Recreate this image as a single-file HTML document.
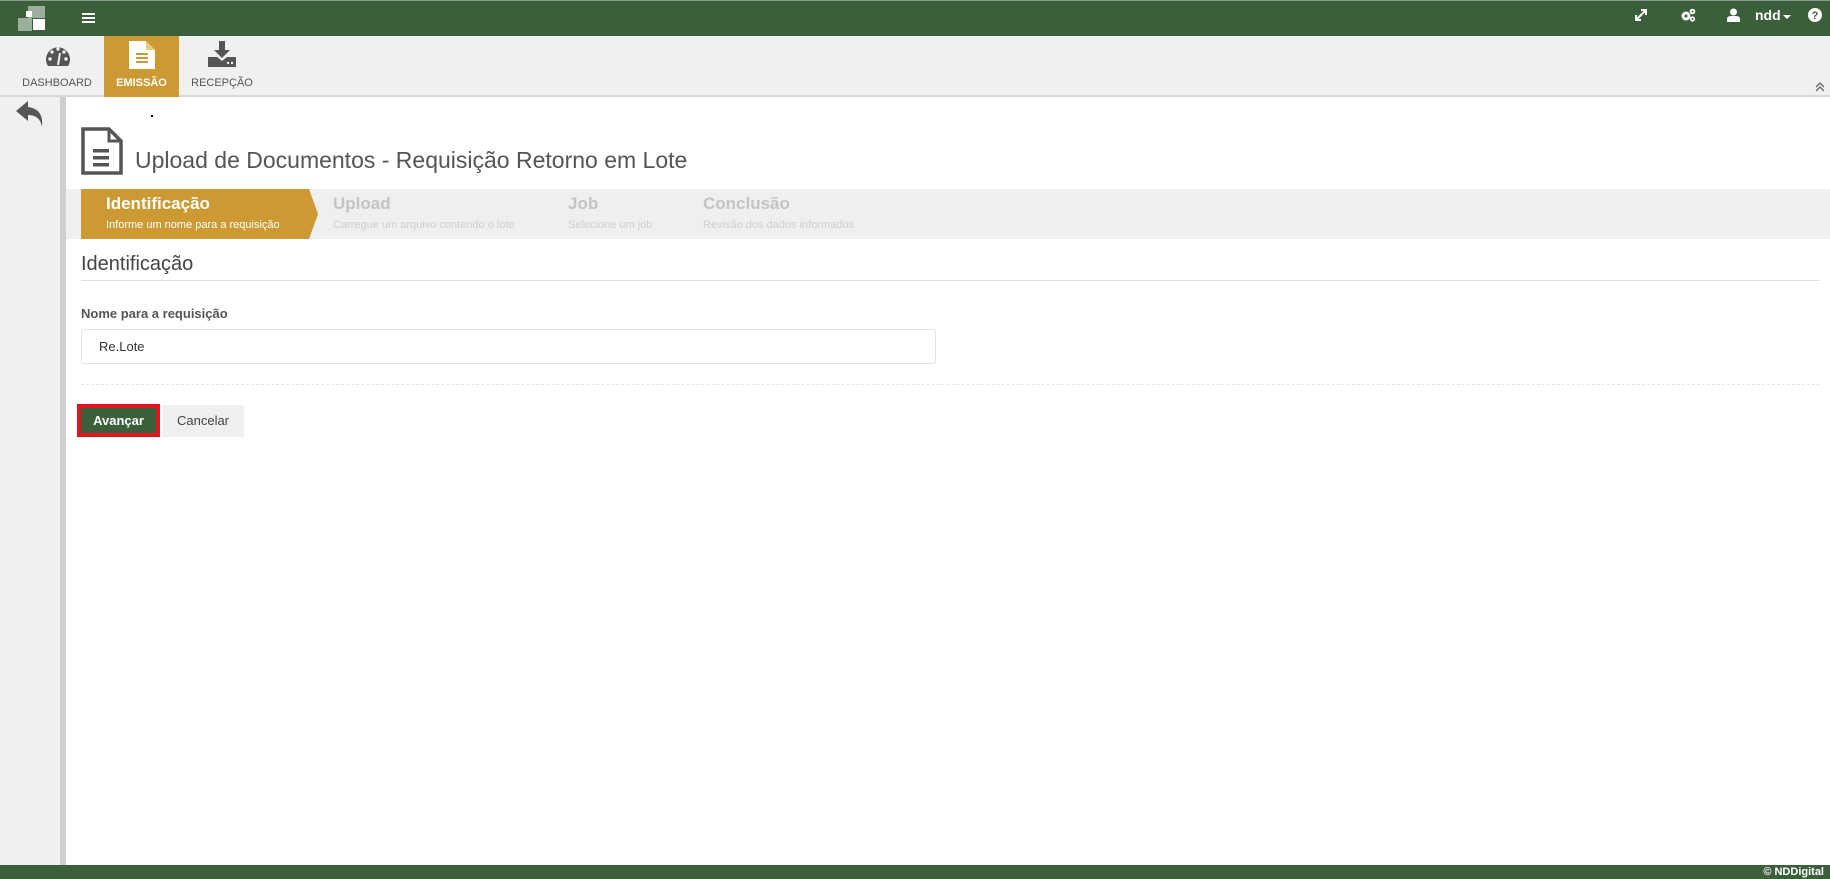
<!DOCTYPE html>
<html><head><meta charset="utf-8"><style>
*{margin:0;padding:0;box-sizing:border-box}
body{width:1830px;height:879px;overflow:hidden;font-family:"Liberation Sans Narrow","Liberation Sans",sans-serif;background:#fff;position:relative;color:#555}
.abs{position:absolute}
#top{left:0;top:0;width:1830px;height:36px;background:#3b5e3b;border-top:1px solid #8a9a8a}
#tool{left:0;top:36px;width:1830px;height:61px;background:#f0f0f0;border-bottom:2px solid #d8d8d8}
.tab{top:36px;height:61px;text-align:center;font-size:11px;color:#555}
.tab span{position:absolute;left:0;right:0;top:41px}
#side{left:0;top:97px;height:768px;background:#f0f0f0;border-right:6px solid #cfcfcf;width:66px}
#foot{left:0;top:865px;width:1830px;height:14px;background:#3b5e3b;color:#fff;font-size:11px;font-weight:bold;text-align:right;padding-right:6px;line-height:14px}
#steps{left:66px;top:189px;width:1764px;height:50px;background:#efefef}
.st{font-size:17px;font-weight:bold;color:#c4c4c4}
.ss{font-size:11px;color:#cfcfcf}
</style></head><body>
<div id="top" class="abs"></div>
<svg class="abs" style="left:18px;top:6px" width="28" height="25"><rect x="10" y="0" width="17" height="12" fill="#9bb09b"/><rect x="0" y="12" width="14" height="13" fill="#9bb09b"/><rect x="8" y="5" width="6" height="6" fill="#fff"/><rect x="15" y="13" width="12" height="11" fill="#fff"/></svg>
<svg class="abs" style="left:82px;top:12px" width="14" height="12"><rect y="1" width="13" height="2" fill="#fff"/><rect y="5" width="13" height="2" fill="#fff"/><rect y="9" width="13" height="2" fill="#fff"/></svg>
<svg class="abs" style="left:1634px;top:8px" width="14" height="14" fill="none" stroke="#fff" stroke-width="2"><path d="M2 12L12 2M7 2h5v5M2 7v5h5"/></svg>
<svg class="abs" style="left:1680px;top:8px" width="16" height="14"><circle cx="6" cy="8" r="4.5" fill="#fff"/><circle cx="6" cy="8" r="1.5" fill="#3b5e3b"/><circle cx="12.5" cy="3.5" r="2.8" fill="#fff"/><circle cx="12.5" cy="3.5" r="1" fill="#3b5e3b"/><circle cx="12.5" cy="11" r="2.6" fill="#fff"/><circle cx="12.5" cy="11" r="1" fill="#3b5e3b"/></svg>
<svg class="abs" style="left:1727px;top:8px" width="13" height="14" fill="#fff"><circle cx="6.5" cy="4" r="3.5"/><path d="M0 14v-3q0-3 4-3h5q4 0 4 3v3z"/></svg>
<div class="abs" style="left:1755px;top:7px;color:#fff;font-size:14px;font-weight:bold;font-family:'Liberation Sans',sans-serif">ndd</div>
<svg class="abs" style="left:1783px;top:15px" width="8" height="5"><path d="M0 0h8L4 4z" fill="#fff"/></svg>
<svg class="abs" style="left:1808px;top:8px" width="14" height="14"><circle cx="7" cy="7" r="7" fill="#fff"/><text x="7" y="11" font-size="11" font-weight="bold" text-anchor="middle" fill="#3b5e3b" font-family="Liberation Sans">?</text></svg>
<div id="tool" class="abs"></div>
<div class="abs tab" style="left:14px;width:86px"><svg class="abs" style="left:30px;top:8px" width="28" height="24"><path d="M4 22A12 12 0 1 1 24 22Z" fill="#555"/><circle cx="6" cy="15" r="1.7" fill="#f0f0f0"/><circle cx="8" cy="8" r="1.7" fill="#f0f0f0"/><circle cx="14" cy="5" r="1.7" fill="#f0f0f0"/><circle cx="20" cy="8" r="1.7" fill="#f0f0f0"/><circle cx="22" cy="15" r="1.7" fill="#f0f0f0"/><path d="M14 21L16 9" stroke="#f0f0f0" stroke-width="2"/></svg><span>DASHBOARD</span></div>
<div class="abs tab" style="left:104px;width:75px;background:#cc9933;color:#fff;font-weight:bold"><svg class="abs" style="left:25px;top:5px" width="26" height="28"><path d="M0 0h17l9 9v19H0z" fill="#fff"/><path d="M17 0v9h9" fill="#e8c98a"/><rect x="7" y="12" width="12" height="2" fill="#cc9933"/><rect x="7" y="16" width="12" height="2" fill="#cc9933"/><rect x="7" y="20" width="12" height="2" fill="#cc9933"/></svg><span>EMISSÃO</span></div>
<div class="abs tab" style="left:188px;width:68px"><svg class="abs" style="left:20px;top:5px" width="28" height="26"><path d="M11 0h6v9h5l-8 8-8-8h5z" fill="#555"/><path d="M0 16h9l5 4 5-4h9v10H0z" fill="#555"/><circle cx="20" cy="22" r="1.2" fill="#f0f0f0"/><circle cx="24" cy="22" r="1.2" fill="#f0f0f0"/></svg><span>RECEPÇÃO</span></div>
<svg class="abs" style="left:1815px;top:82px" width="10" height="10" fill="none" stroke="#666" stroke-width="1.3"><path d="M1 5l4-4 4 4M1 9l4-4 4 4"/></svg>
<div id="side" class="abs"></div>
<svg class="abs" style="left:16px;top:101px" width="30" height="28"><path d="M12 0L0 10l12 10v-6q12 0 14 12q2-18-14-20z" fill="#555"/></svg>
<div class="abs" style="left:151px;top:115px;width:2px;height:2px;background:#000"></div>
<svg class="abs" style="left:81px;top:127px" width="42" height="48"><path d="M2 2h26l12 12v32H2z" fill="none" stroke="#555" stroke-width="3.5"/><path d="M28 2v12h12" fill="none" stroke="#555" stroke-width="3"/><rect x="12" y="22" width="16" height="3.5" fill="#555"/><rect x="12" y="29" width="16" height="3.5" fill="#555"/><rect x="12" y="36" width="16" height="3.5" fill="#555"/></svg>
<div class="abs" style="left:135px;top:147px;font-size:23px;color:#555">Upload de Documentos - Requisição Retorno em Lote</div>
<div id="steps" class="abs"></div>
<svg class="abs" style="left:81px;top:189px" width="240" height="50"><path d="M0 0h228l9 25-9 25H0z" fill="#cc9933"/></svg>
<div class="abs st" style="left:106px;top:194px;color:#fff">Identificação</div>
<div class="abs ss" style="left:106px;top:219px;color:#fff">Informe um nome para a requisição</div>
<div class="abs st" style="left:333px;top:194px">Upload</div>
<div class="abs ss" style="left:333px;top:219px">Carregue um arquivo contendo o lote</div>
<div class="abs st" style="left:568px;top:194px">Job</div>
<div class="abs ss" style="left:568px;top:219px">Selecione um job</div>
<div class="abs st" style="left:703px;top:194px">Conclusão</div>
<div class="abs ss" style="left:703px;top:219px">Revisão dos dados informados</div>
<div class="abs" style="left:81px;top:253px;font-size:20px;color:#444">Identificação</div>
<div class="abs" style="left:81px;top:280px;width:1739px;height:1px;background:#e0e0e0"></div>
<div class="abs" style="left:81px;top:306px;font-size:13px;font-weight:bold;color:#555">Nome para a requisição</div>
<div class="abs" style="left:81px;top:329px;width:855px;height:35px;border:1px solid #dfe3e3;border-radius:3px;font-size:13px;color:#333;padding:9px 0 0 17px">Re.Lote</div>
<div class="abs" style="left:81px;top:384px;width:1739px;border-top:1px dashed #e6e6e6"></div>
<div class="abs" style="left:77px;top:404px;width:83px;height:33px;background:#e0161e;padding:4px"><div style="background:#3b5e3b;height:25px;color:#fff;font-size:13px;font-weight:bold;text-align:center;line-height:25px">Avançar</div></div>
<div class="abs" style="left:162px;top:405px;width:82px;height:32px;background:#efefef;font-size:13px;color:#444;text-align:center;line-height:32px">Cancelar</div>
<div id="foot" class="abs">© NDDigital</div>
</body></html>
